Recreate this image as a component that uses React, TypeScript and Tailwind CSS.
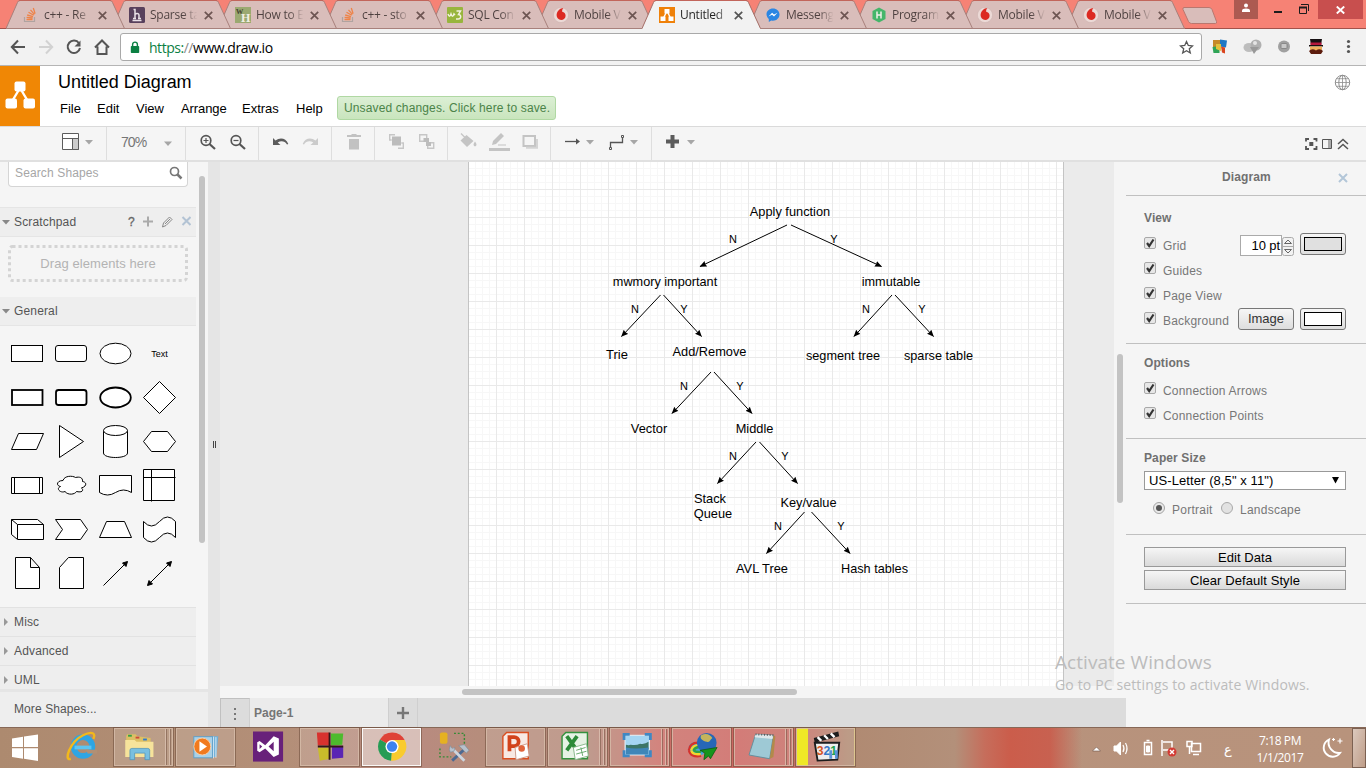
import React from "react";

type Kids = { children?: React.ReactNode };

/* ---------- Browser tabs ---------- */

const tabs: { icon: string; title: string }[] = [
  { icon: "so", title: "c++ - Re" },
  { icon: "h", title: "Sparse ta" },
  { icon: "wh", title: "How to E" },
  { icon: "so", title: "c++ - sto" },
  { icon: "w3", title: "SQL Con" },
  { icon: "voda", title: "Mobile V" },
  { icon: "draw", title: "Untitled" },
  { icon: "msg", title: "Messeng" },
  { icon: "hr", title: "Program" },
  { icon: "voda", title: "Mobile V" },
  { icon: "voda", title: "Mobile V" },
];

function Favicon({ kind }: { kind: string }) {
  switch (kind) {
    case "so":
      return (
        <svg width="16" height="16" viewBox="0 0 16 16" fill="none" className="shrink-0">
          <path d="M1.5 10v4.5h10V10" stroke="#b0a3a0" strokeWidth="1.2" />
          <path d="M3.5 12.5h6M3.6 10.4l6 .6M4.2 8l5.8 1.6M5.5 5.2l5.2 3M7.5 2.8l3.9 4.6M10.3 1l1.8 5.6" stroke="#ee8348" strokeWidth="1.3" />
        </svg>
      );
    case "h":
      return (
        <svg width="16" height="16" viewBox="0 0 16 16" fill="none" className="shrink-0">
          <rect width="16" height="16" rx="1.5" fill="#58405c" />
          <path d="M4.500 2.500h1.500v9M6 7.500c1-1.500 4-1.500 4 .5v3.500M4 11.500h3M9 11.500h3M3.500 13.500h9" stroke="#e9dfe6" strokeWidth="1.500" />
        </svg>
      );
    case "wh":
      return (
        <svg width="16" height="16" viewBox="0 0 16 16" className="shrink-0">
          <rect width="16" height="16" fill="#9ba971" />
          <text x="1" y="7" fontSize="10" fontWeight="bold" fontFamily="Liberation Serif, serif" fill="#4c4a36">w</text>
          <text x="6" y="15" fontSize="12" fontWeight="bold" fontFamily="Liberation Serif, serif" fill="#f3efe4">H</text>
        </svg>
      );
    case "w3":
      return (
        <svg width="16" height="16" viewBox="0 0 16 16" fill="none" className="shrink-0">
          <rect width="16" height="16" rx="1" fill="#98b53d" />
          <path d="M1 7c1 3 2 3 3 0 1 3 2 3 3 0l1 1M9.500 4h4l-2 3.500c3 0 3 4.500-.5 4.500H9" stroke="#f2f1df" strokeWidth="1.500" />
        </svg>
      );
    case "voda":
      return (
        <svg width="16" height="16" viewBox="0 0 16 16" className="shrink-0">
          <circle cx="8" cy="8" r="7.600" fill="#ecd9d6" stroke="#cfb5b2" strokeWidth=".6" />
          <path d="M10.500 1C7 1 3.600 4.500 3.600 8.300c0 2.700 2 4.700 4.500 4.700s4.500-1.800 4.500-4.300c0-2.300-1.500-3.500-3.400-4C9 3 9.500 1.700 10.500 1z" fill="#dc2a22" />
        </svg>
      );
    case "draw":
      return (
        <svg width="16" height="16" viewBox="0 0 16 16" className="shrink-0">
          <rect width="16" height="16" fill="#ef8109" />
          <path d="M8 4L4 12M8 4l4 8" stroke="#fff" strokeWidth="1.400" />
          <rect x="5.500" y="2" width="5" height="4.500" fill="#fff" />
          <rect x="1.500" y="9.500" width="5" height="4.500" fill="#fff" />
          <rect x="9.500" y="9.500" width="5" height="4.500" fill="#fff" />
        </svg>
      );
    case "msg":
      return (
        <svg width="16" height="16" viewBox="0 0 16 16" className="shrink-0">
          <path d="M8 1.500c-3.600 0-6.500 2.500-6.500 5.800 0 1.900.9 3.500 2.300 4.600V15l2.500-1.500c.5.100 1.100.2 1.700.2 3.600 0 6.500-2.800 6.500-6.200S11.600 1.500 8 1.500z" fill="#2b86e3" />
          <path d="M3.500 9.500l3.600-3.700 1.900 1.700 3.500-1.700L9 9.500 7 7.800z" fill="#fff" />
        </svg>
      );
    default:
      return (
        <svg width="16" height="16" viewBox="0 0 16 16" fill="none" className="shrink-0">
          <path d="M8 .5l6.500 3.500v8L8 15.500 1.500 12V4z" fill="#45b66a" />
          <path d="M6 4.500v7M10 4.500v7M6 8h4" stroke="#f1efe9" strokeWidth="1.500" />
        </svg>
      );
  }
}

const tabZ = ["z-20", "z-[19]", "z-[18]", "z-[17]", "z-[16]", "z-[15]", "z-30", "z-[13]", "z-[12]", "z-[11]", "z-10"];

function Tab({ icon, title, i }: { icon: string; title: string; i: number }) {
  const active = i === 6;
  return (
    <div className={`relative h-[29px] w-[106px] shrink-0 ${tabZ[i]}`}>
      <svg className="absolute left-0 top-0" width="120" height="29" fill="none">
        <path d="M0 29L11.500 2.500Q12 1 14 1H104Q106 1 106.500 2.500L118.500 29z" fill={active ? "#f2f2f2" : "#d9bdba"} />
        <path d="M0 28.500L11.500 2.500Q12 .5 14 .5H104Q106 .5 106.500 2.500L118.500 28.500" stroke={active ? "#a56f68" : "#a8817c"} />
        {!active && <path d="M0 28.500h119" stroke="#a8817c" />}
        <path d="M13 .5H105" stroke="#c2655b" />
      </svg>
      <div className="relative flex h-[29px] items-center pl-[17px] pt-px">
        <Favicon kind={icon} />
        <span
          className={`ml-[5px] w-[50px] whitespace-nowrap bg-clip-text font-['Open_Sans',sans-serif] text-[12px] tracking-[-0.25px] text-transparent ${
            active ? "bg-linear-to-r from-[#222] from-70% to-[#bbb] to-95%" : "bg-linear-to-r from-[#4d403f] from-65% to-[#d9bdba] to-95%"
          }`}
        >
          {title}
        </span>
        <svg className="ml-[4px] shrink-0" width="9" height="9" viewBox="0 0 9 9" fill="none">
          <path d="M.8.8l7.400 7.400M8.200.8L.8 8.200" stroke={active ? "#555" : "#6d5552"} strokeWidth="1.700" />
        </svg>
      </div>
    </div>
  );
}

function TabStrip() {
  return (
    <div className="flex h-[29px] shrink-0 bg-[#f68275] pl-[6px] shadow-[inset_0_-1px_0_#a2524b]">
      {tabs.map((t, i) => (
        <Tab key={i} {...t} i={i} />
      ))}
      <svg className="ml-[10px] mt-[6px] shrink-0" width="38" height="20">
        <path d="M2 1.500h25q2 0 3 2l4.500 12q.5 2-1 2H9.500q-2 0-3-2L1 3.500q-.5-2 1-2z" fill="#d9bdba" stroke="#b9776f" />
      </svg>
      <div className="ml-auto mr-[3px] flex h-[19px]">
        <div className="flex w-[24px] justify-center bg-[#ac5a51] pt-[3px]">
          <svg width="10" height="10" viewBox="0 0 10 10" fill="#fff">
            <circle cx="5" cy="2.500" r="2" />
            <path d="M1 9V7.500Q1 5.500 5 5.500t4 2V9z" />
          </svg>
        </div>
        <svg width="60" height="19" fill="none" stroke="#1c1c1c">
          <path d="M16 12h8" strokeWidth="2" />
          <path d="M41.500 7.500h7v6h-7z" />
          <path d="M41 6.500h8v2h-8z" fill="#1c1c1c" stroke="none" />
          <path d="M43 4.500h7.500V11" />
        </svg>
        <div className="flex w-[45px] items-center justify-center bg-[#c84f4e]">
          <svg width="9" height="8" viewBox="0 0 9 8" stroke="#fff" strokeWidth="1.900">
            <path d="M.8.500l7.400 7M8.200.500l-7.400 7" />
          </svg>
        </div>
      </div>
    </div>
  );
}

function AddressBar() {
  return (
    <div className="flex h-[37px] shrink-0 items-center border-b border-[#b5b5b5] bg-[#f2f2f2]">
      <svg width="120" height="36" fill="none" strokeWidth="2">
        <path d="M25 18H12M18 11.500L11.800 18l6.200 6.500" stroke="#555" />
        <path d="M39 18h13M46 11.500l6.200 6.500-6.200 6.500" stroke="#d2d2d2" />
        <path d="M79 14.200A6.200 6.200 0 1 0 80 19" stroke="#555" />
        <path d="M80.500 11.500v6h-6z" fill="#555" />
        <path d="M95 18.500L102 11.500l7 7M97.500 17.500V25h9v-7.500" stroke="#555" />
      </svg>
      <div className="flex h-[28px] w-[1082px] items-center rounded-[3px] border border-[#a9a9a9] bg-white pl-[9px] pr-[7px]">
        <svg width="10" height="13" viewBox="0 0 10 13" fill="none">
          <rect x=".8" y="5" width="8.400" height="7" rx=".8" fill="#0b8043" />
          <path d="M2.600 5V3.500a2.400 2.400 0 0 1 4.800 0V5" stroke="#0b8043" strokeWidth="1.400" />
        </svg>
        <span className="ml-[9px] font-['Open_Sans',sans-serif] text-[14px] tracking-[-0.47px] text-black">
          <span className="text-[#0b8043]">https:</span>
          <span className="text-[#8a8a8a]">//</span>www.draw.io
        </span>
        <svg className="ml-auto" width="15" height="15" viewBox="0 0 15 15" fill="none">
          <path d="M7.500 1.500l1.800 4 4.200.4-3.200 2.900 1 4.200-3.800-2.200L3.700 13l1-4.200L1.500 5.900l4.200-.4z" stroke="#555" strokeWidth="1.300" />
        </svg>
      </div>
      <svg width="164" height="36">
        <path d="M11 11h7v7l-7 1z" fill="#c68a28" />
        <path d="M18 10.500l7 1-1 7-6-1z" fill="#1f78c4" />
        <path d="M10.500 18l7-1v7h-6z" fill="#2fa457" />
        <path d="M19 17.500l4 1v6l-3-1z" fill="#d9441e" />
        <path d="M14 15h5v7l-5-2z" fill="#e3c23c" />
        <ellipse cx="47" cy="18.500" rx="5.500" ry="4.500" fill="#bdbdbd" />
        <circle cx="54" cy="16" r="5.500" fill="#b0b0b0" />
        <path d="M48 18h9l-5 7z" fill="#999" />
        <circle cx="53" cy="14" r="2" fill="#e4e4e4" />
        <circle cx="82" cy="17.500" r="6" fill="#a0a0a0" />
        <rect x="79" y="14.500" width="6" height="5" rx="1" fill="#c9c9c9" stroke="#7d7d7d" strokeWidth=".8" />
        <path d="M108 10h12l-1 6h-10z" fill="#161012" />
        <path d="M108.500 13.500h11V16h-11z" fill="#b5173b" />
        <path d="M107 16h14v1.500h-14z" fill="#161012" />
        <rect x="108" y="17.500" width="12" height="6" fill="#f0b05c" />
        <path d="M107 22q3-3 7-.5 4-2.500 7 .5l-2 3h-10z" fill="#5c1c0e" />
        <g fill="#555">
          <circle cx="146.500" cy="12.500" r="1.600" />
          <circle cx="146.500" cy="17.500" r="1.600" />
          <circle cx="146.500" cy="22.500" r="1.600" />
        </g>
      </svg>
    </div>
  );
}

/* ---------- App header ---------- */

function Header() {
  return (
    <div className="flex h-[60px] shrink-0 bg-white">
      <svg width="40" height="60" className="shrink-0">
        <rect width="40" height="60" fill="#f08705" />
        <path d="M20 22L11 37M20 22l9 15" stroke="#fff" strokeWidth="2.400" />
        <rect x="14.500" y="15.500" width="11" height="10" rx="2" fill="#fff" />
        <rect x="5.500" y="32.500" width="11.500" height="10" rx="2" fill="#fff" />
        <rect x="23.500" y="32.500" width="11.500" height="10" rx="2" fill="#fff" />
      </svg>
      <div className="flex flex-col">
        <div className="pl-[18px] pt-[5px] text-[18px] leading-[23px] tracking-[-0.03px] text-black">Untitled Diagram</div>
        <div className="flex items-center pl-[20px] pt-[2px] text-[13px] text-black">
          <span className="w-[37px] pt-px">File</span>
          <span className="w-[39px] pt-px">Edit</span>
          <span className="w-[45px] pt-px">View</span>
          <span className="w-[61px] pt-px tracking-[-0.1px]">Arrange</span>
          <span className="w-[54px] pt-px">Extras</span>
          <span className="w-[41px] pt-px">Help</span>
          <span className="h-[24px] w-[219px] whitespace-nowrap rounded-[3px] border border-[#b0d8a3] bg-linear-to-b from-[#dcefd5] to-[#c9e5bd] pl-[6px] text-[12px] leading-[22px] tracking-[0.13px] text-[#4b8349]">
            Unsaved changes. Click here to save.
          </span>
        </div>
      </div>
      <svg className="ml-auto mr-[15px] mt-[8px]" width="17" height="17" viewBox="0 0 17 17" fill="none" stroke="#8d8d8d">
        <circle cx="8.500" cy="8.500" r="7.200" />
        <ellipse cx="8.500" cy="8.500" rx="3.700" ry="7.200" />
        <path d="M8.500 1.200v14.600M1.200 8.500h14.600M2.500 4.700h12M2.500 12.300h12" strokeWidth=".8" />
      </svg>
    </div>
  );
}

function Caret({ x, y }: { x: number; y: number }) {
  return <path d={`M${x} ${y}h8l-4 4.500z`} fill="#a6a6a6" stroke="none" />;
}

function Toolbar() {
  return (
    <div className="flex h-[36px] shrink-0 border-b-2 border-t border-b-[#e0e0e0] border-t-[#dadada] bg-[#f5f5f5]">
      <svg width="106" height="33" fill="none" stroke="#5c5c5c">
        <path d="M62.500 6.500h16v16h-16z" fill="#fff" />
        <path d="M72.500 11.500h6v11h-6z" fill="#ccc" />
        <path d="M62.500 11.500h16" />
        <Caret x={85} y={13} />
      </svg>
      <div className="flex w-[79px] items-center border-l border-[#dedede] pb-[2px] pl-[14px] text-[14px] text-[#757575]">
        <span className="w-[43px] tracking-[-0.95px]">70%</span>
        <svg width="10" height="6" className="mt-[2px]">
          <Caret x={0} y={0.5} />
        </svg>
      </div>
      <svg width="73" height="33" className="border-l border-[#dedede]" fill="none" stroke="#555" strokeWidth="1.700">
        <circle cx="20" cy="13.500" r="4.800" />
        <path d="M23.500 17l5.500 5" strokeWidth="2.200" />
        <path d="M17.500 13.500h5M20 11v5" strokeWidth="1.200" />
        <circle cx="50" cy="13.500" r="4.800" />
        <path d="M53.500 17l5.500 5" strokeWidth="2.200" />
        <path d="M47.500 13.500h5" strokeWidth="1.200" />
      </svg>
      <svg width="73" height="33" className="border-l border-[#dedede]">
        <path d="M14 11v7h7.500l-2.800-2.500C22 13.500 26 14 28 17.500l1.300-.5C27 11 21 10 16.500 13.500z" fill="#5c5c5c" />
        <path d="M59 11v7h-7.500l2.800-2.500C51 13.500 47 14 45 17.500l-1.300-.5C46 11 52 10 56.500 13.500z" fill="#cbcbcb" />
      </svg>
      <svg width="43" height="33" className="border-l border-[#dedede]" fill="#c2c2c2">
        <path d="M15 8h4.500V7h5v1H29v2H15zM17 12h10v10.500H17z" />
      </svg>
      <svg width="73" height="33" className="border-l border-[#dedede]" fill="none" stroke="#c6c6c6">
        <path d="M20 7.700h-5.300v5.300h2M23 21.300h5.300V16h-2" strokeWidth="1.400" />
        <rect x="17" y="9.500" width="9" height="9" fill="#bcbcbc" stroke="none" />
        <path d="M44.700 7.700h7v6.600h-7zM52.700 15.700h6v5.600h-6z" strokeWidth="1.400" />
        <path d="M48.500 11H54v4h2v4h-5v-4h-2.500z" fill="#bcbcbc" stroke="none" />
      </svg>
      <svg width="103" height="33" className="border-l border-[#dedede]" fill="#c4c4c4">
        <path d="M12.500 13.500l6-5.500 7 6-6.500 6z" />
        <path d="M13 6.500l7 7" stroke="#c4c4c4" strokeWidth="1.300" />
        <path d="M27 14.500q3 4 0 5-3-1 0-5z" />
        <path d="M44 18l1-4 8-8 3 3-8 8zM50 17.500h8v1h-8zM41 21h21v3H41z" />
        <path d="M75.500 9h11.500v10H75.500z" fill="none" stroke="#c4c4c4" strokeWidth="2" />
        <path d="M78 20.800h11V12" fill="none" stroke="#d4d4d4" strokeWidth="2" />
      </svg>
      <svg width="101" height="33" className="border-l border-[#dedede]" fill="none" stroke="#555">
        <path d="M14 14.500h12" strokeWidth="1.300" />
        <path d="M25 11.500l4 3-4 3z" fill="#555" stroke="none" />
        <Caret x={35} y={13} />
        <path d="M59.500 20v-4.500h12V11" strokeWidth="1.300" />
        <path d="M58.500 20.500h2v2h-2zM70.500 8.500h2v2h-2z" />
        <Caret x={79} y={13} />
      </svg>
      <svg width="60" height="33" className="border-l border-[#dedede]">
        <path d="M18.500 8h4v4.500H27v4h-4.500V21h-4v-4.500H14v-4h4.500z" fill="#5c5c5c" />
        <Caret x={35} y={13} />
      </svg>
      <svg className="ml-auto mr-[16px]" width="46" height="33" fill="none" stroke="#555" strokeWidth="1.800">
        <path d="M2 14.500V12h3M9.500 12h3v2.500M12.500 19v3h-3M5 22H2v-3" />
        <rect x="5.300" y="15" width="4" height="4" fill="#555" stroke="none" />
        <path d="M18.500 12.500h9v9h-9z" strokeWidth="1" />
        <path d="M24 13h3v8h-3z" fill="#aaa" stroke="none" />
        <path d="M34 17l5-4.500 5 4.500M34 22l5-4.500 5 4.500" strokeWidth="1.500" />
      </svg>
    </div>
  );
}

/* ---------- Left sidebar ---------- */

const shapes: React.ReactNode[] = [
  <rect x="6.500" y="14.500" width="31" height="16" />,
  <rect x="6.500" y="14.500" width="31" height="16" rx="2.500" />,
  <ellipse cx="22.500" cy="22.500" rx="15.500" ry="10.300" />,
  <text x="22.500" y="26" textAnchor="middle" fontSize="9" fill="#000" stroke="none">Text</text>,
  <rect x="7" y="15" width="30.500" height="15" strokeWidth="1.800" />,
  <rect x="7" y="15" width="30.500" height="15" rx="2.500" strokeWidth="1.800" />,
  <ellipse cx="22.500" cy="22.500" rx="15.300" ry="10" strokeWidth="1.800" />,
  <path d="M22.500 6.500l16 16-16 16-16-16z" />,
  <path d="M13.500 14.500h25l-7 16h-25z" />,
  <path d="M10.500 6.500l24 16-24 16z" />,
  <g>
    <path d="M10.500 11.500v22.500c0 6 24 6 24 0V11.500" />
    <ellipse cx="22.500" cy="11.500" rx="12" ry="5" />
  </g>,
  <path d="M6.500 22.500l8-10h16l8 10-8 10h-16z" />,
  <path d="M6.500 14.500h31v16h-31zM9.500 14.500v16M34.500 14.500v16" />,
  <path d="M14 17.500c-6 0-7.500 5-2.500 6-5 2 0 7 4.500 5 3 4 10 3 11.500 0 6 1.500 7.500-1.500 5-3.500 6-2 5-6 1-6.500.5-4-3-5-7-4-3-2-11-2-12.500 3z" />,
  <path d="M6.500 12.500h32v17q-8-5-16 0t-16 0z" />,
  <path d="M6.500 6.500h31v31h-31zM6.500 14.500h32M14.500 6.500v32" />,
  <path d="M6.500 12.500h26l6 5v15h-26l-6-5zM12.500 32v-14.500h26M12.500 17.500l-6-5" />,
  <path d="M6.500 12.500h25l7 10-7 10h-25l7-10z" />,
  <path d="M13.500 14.500h18l7 16h-32z" />,
  <path d="M6.500 14.500q8 9 16 0t16 0v16q-8-9-16 0t-16 0z" />,
  <path d="M10.500 6.500h15l9 10v21h-24zM25.500 6.500v10h9" />,
  <path d="M19.500 6.500h15v31h-24v-21z" />,
  <g>
    <path d="M10.500 34.500l22-22" />
    <path d="M34.500 10.500l-5 1.500 3.500 3.500z" fill="#000" />
  </g>,
  <g>
    <path d="M12 33l21-21" />
    <path d="M34.500 10.500l-5 1.500 3.500 3.500zM10.500 34.500l1.500-5 3.500 3.500z" fill="#000" />
  </g>,
];

function Sidebar() {
  return (
    <div className="flex w-[208px] shrink-0 flex-col bg-[#f5f5f5]">
      <div className="flex h-[527px] overflow-hidden">
        <div className="flex w-[196px] flex-col">
          <div className="ml-[8px] flex h-[25px] w-[180px] shrink-0 items-center justify-between rounded-b-[4px] border border-t-0 border-[#d5d5d5] bg-white pl-[6px] pr-[4px]">
            <span className="pb-[2px] text-[12px] tracking-[0.13px] text-[#a6a6a6]">Search Shapes</span>
            <svg className="mb-[3px]" width="14" height="14" fill="none" stroke="#777">
              <circle cx="5.500" cy="5.500" r="4" strokeWidth="1.700" />
              <path d="M8.500 8.500l4 4" strokeWidth="2.500" />
            </svg>
          </div>
          <div className="mt-[20px] flex h-[30px] shrink-0 items-center border-y border-[#e5e5e5] bg-[#eee] text-[12px] text-[#555]">
            <svg width="14" height="10">
              <path d="M2 3h8l-4 4.500z" fill="#888" />
            </svg>
            <span className="w-[113px] tracking-[0.15px]">Scratchpad</span>
            <svg width="64" height="16" fill="none">
              <text x="1" y="12" fontSize="12" fill="#666" stroke="#666" strokeWidth=".3">?</text>
              <path d="M21 2.500v10M16 7.500h10" stroke="#aaa" strokeWidth="2" />
              <path d="M35.500 13l1-4 6-6 2.500 2.500-6 6zM38 10l5-5" stroke="#888" />
              <path d="M55.500 3l8 8M63.500 3l-8 8" stroke="#b3c3d4" strokeWidth="2" />
            </svg>
          </div>
          <div className="relative ml-[8px] mt-[8px] flex h-[37px] w-[180px] shrink-0 items-center justify-center text-[13px] tracking-[0.07px] text-[#b3b3b3]">
            <svg className="absolute left-0 top-0" width="180" height="37" fill="none">
              <rect x="1.500" y="1.500" width="177" height="34" rx="3" stroke="#d4d4d4" strokeWidth="3" strokeDasharray="3 3" />
            </svg>
            Drag elements here
          </div>
          <div className="mt-[15px] flex h-[29px] shrink-0 items-center border-b border-[#e5e5e5] bg-[#eee] text-[12px] text-[#555]">
            <svg width="14" height="10">
              <path d="M2 3h8l-4 4.500z" fill="#888" />
            </svg>
            <span className="tracking-[0.15px]">General</span>
          </div>
          <div className="grid shrink-0 grid-cols-[repeat(4,44px)] pb-[12px] pl-[5px] pt-[5px]">
            {shapes.map((s, i) => (
              <svg key={i} width="44" height="44" fill="#fff" stroke="#000">
                {s}
              </svg>
            ))}
          </div>
          {["Misc", "Advanced", "UML"].map((t) => (
            <div key={t} className="flex h-[29px] shrink-0 items-center border-t border-[#e2e2e2] bg-[#eee] text-[12px] tracking-[0.15px] text-[#555]">
              <svg width="14" height="10">
                <path d="M4 1v8l4-4z" fill="#999" />
              </svg>
              {t}
            </div>
          ))}
        </div>
        <div className="flex w-[12px] flex-col bg-[#f5f5f5] pl-[3px] pt-[14px]">
          <div className="h-[367px] w-[6px] rounded-full bg-[#c3c3c3]" />
        </div>
      </div>
      <div className="flex h-[38px] items-center border-t-[3px] border-[#e5e5e5] bg-[#eee] pb-[2px] pl-[14px] text-[12px] tracking-[0.1px] text-[#555]">
        More Shapes...
      </div>
    </div>
  );
}

/* ---------- Canvas ---------- */

const nodes: [string, number, number, number][] = [
  ["Apply function", 790, 216, 12.8],
  ["mwmory important", 665, 286, 12.7],
  ["immutable", 891, 286, 12.7],
  ["Trie", 617, 359, 13],
  ["Add/Remove", 709.5, 356, 12.8],
  ["segment tree", 843, 360, 12.7],
  ["sparse table", 938.5, 360, 12.7],
  ["Vector", 649, 433, 12.8],
  ["Middle", 754.5, 433, 12.8],
  ["Stack", 710, 503, 12.8],
  ["Queue", 713, 518, 12.8],
  ["Key/value", 808.5, 507, 12.8],
  ["AVL Tree", 762, 573, 12.8],
  ["Hash tables", 874.5, 573, 12.7],
  ["N", 733, 243, 11],
  ["Y", 834, 243, 11],
  ["N", 635, 313, 11],
  ["Y", 684, 313, 11],
  ["N", 866, 313, 11],
  ["Y", 922, 313, 11],
  ["N", 684, 390, 11],
  ["Y", 740, 390, 11],
  ["N", 733, 460, 11],
  ["Y", 785, 460, 11],
  ["N", 778, 530, 11],
  ["Y", 841, 530, 11],
];

const edges: [number, number, number, number][] = [
  [787, 225, 700, 266.5],
  [791, 225, 881.5, 266.5],
  [660.5, 295, 621.5, 336.5],
  [663.5, 295, 701.5, 336.5],
  [892, 295, 854, 336.5],
  [895, 295, 933.5, 336.5],
  [711, 372, 672, 413.5],
  [714, 372, 752, 413.5],
  [756, 442, 717.5, 483.5],
  [759.5, 442, 797.5, 483.5],
  [804.5, 512, 766.5, 553.5],
  [811.5, 512, 850, 553.5],
];

function Canvas() {
  return (
    <div className="flex w-[906px] shrink-0 flex-col">
      <div className="flex h-[524px]">
        <svg width="894" height="524" viewBox="220 162 894 524" className="shrink-0">
          <defs>
            <pattern id="grid" width="28" height="28" x="496" y="189" patternUnits="userSpaceOnUse">
              <path d="M7.500 0v28M14.500 0v28M21.500 0v28M0 7.500h28M0 14.500h28M0 21.500h28" stroke="#f7f7f7" />
              <path d="M.5 0v28M0 .5h28" stroke="#e9e9e9" />
            </pattern>
            <marker id="arrow" viewBox="0 0 7 6" refX="6.500" refY="3" markerWidth="7" markerHeight="6.500" orient="auto">
              <path d="M0 0l7 3-7 3 .8-3z" />
            </marker>
          </defs>
          <rect x="220" y="162" width="894" height="524" fill="#ebebeb" />
          <rect x="469" y="162" width="594" height="524" fill="#fff" />
          <rect x="469" y="162" width="594" height="524" fill="url(#grid)" />
          <path d="M468.500 162v524M1063.500 162v524" stroke="#c4c4c4" />
          {edges.map(([a, b, c, d], i) => (
            <path key={i} d={`M${a} ${b}L${c} ${d}`} stroke="#000" markerEnd="url(#arrow)" />
          ))}
          {nodes.map(([t, x, y, s], i) => (
            <text key={i} x={x} y={y} fontSize={s} textAnchor="middle" fill="#000">
              {t}
            </text>
          ))}
        </svg>
        <div className="flex w-[12px] flex-col bg-[#f5f5f5] pl-[3px] pt-[192px]">
          <div className="h-[149px] w-[6px] rounded-full bg-[#c3c3c3]" />
        </div>
      </div>
      <div className="flex h-[12px] bg-[#f5f5f5] pl-[242px] pt-[3px]">
        <div className="h-[6px] w-[335px] rounded-full bg-[#c3c3c3]" />
      </div>
      <div className="flex h-[29px] bg-[#dcdcdc] text-[12px] font-bold text-[#757575]">
        <div className="flex w-[30px] items-center justify-center border-l border-r border-t border-[#c0c0c0] border-r-[#cfcfcf]">
          <svg width="4" height="14" fill="#777">
            <path d="M1 2h2v2H1zM1 7h2v2H1zM1 12h2v2H1z" />
          </svg>
        </div>
        <div className="flex w-[139px] items-center border-r border-[#cfcfcf] bg-[#ebebeb] pl-[4px]">Page-1</div>
        <div className="flex w-[29px] items-center justify-center border-r border-[#cfcfcf]">
          <svg width="12" height="12" stroke="#777" strokeWidth="2.400">
            <path d="M6 0v12M0 6h12" />
          </svg>
        </div>
      </div>
    </div>
  );
}

/* ---------- Format panel ---------- */

function Check({ label }: { label: string }) {
  return (
    <div className="flex h-[25px] w-[94px] items-center whitespace-nowrap text-[12px] tracking-[0.2px] text-[#777]">
      <svg className="mb-[3px] mr-[7px] shrink-0" width="12" height="12" fill="none">
        <rect x=".5" y=".5" width="11" height="11" rx="1.500" fill="#e7e7e7" stroke="#a8a8a8" />
        <path d="M3 6l2.200 3L9.500 2.500" stroke="#333" strokeWidth="2.200" />
      </svg>
      <span className="pt-[2px]">{label}</span>
    </div>
  );
}

function Swatch({ dark }: { dark?: boolean }) {
  return (
    <div className="flex h-[22px] w-[46px] items-center justify-center rounded-[3px] border border-[#777] bg-linear-to-b from-[#f6f6f6] to-[#dedede]">
      <div className={`h-[14px] w-[38px] border border-black ${dark ? "bg-[#e0e0e0]" : "bg-white"}`} />
    </div>
  );
}

function Section({ title, className, children }: Kids & { title?: string; className: string }) {
  return (
    <div className={`flex shrink-0 flex-col border-b border-[#c0c0c0] pl-[18px] pr-[20px] ${className}`}>
      {title && <div className="text-[12px] font-bold leading-[16px] tracking-[0.1px] text-[#707070]">{title}</div>}
      {children}
    </div>
  );
}

function FormatPanel() {
  return (
    <div className="flex w-[240px] shrink-0 flex-col bg-[#f5f5f5]">
      <div className="flex h-[34px] items-center border-b border-[#c0c0c0] pl-[96px] pr-[18px]">
        <span className="pb-[4px] text-[12px] font-bold tracking-[0.1px] text-[#707070]">Diagram</span>
        <svg className="mb-[2px] ml-auto" width="10" height="10" stroke="#b3c6d8" strokeWidth="2">
          <path d="M1 1l8 8M9 1L1 9" />
        </svg>
      </div>
      <Section title="View" className="h-[148px] pt-[14px]">
        <div className="mt-[6px] flex">
          <Check label="Grid" />
          <div className="ml-[2px] mt-[3px] flex h-[21px] w-[42px] shrink-0 items-center justify-end border border-[#aaa] bg-white pr-px text-[13px] tracking-[-0.1px] text-black">10 pt</div>
          <svg className="mt-[5px] shrink-0" width="12" height="19" fill="none" stroke="#aaa">
            <rect x=".5" y=".5" width="11" height="18" rx="2" fill="#f2f2f2" />
            <path d="M1 9.500h10" />
            <path d="M2.500 6.500L6 3l3.500 3.500zM2.500 12.500L6 16l3.500-3.500z" stroke="#666" />
          </svg>
          <div className="ml-[6px] mt-px h-[22px]">
            <Swatch dark />
          </div>
        </div>
        <Check label="Guides" />
        <Check label="Page View" />
        <div className="flex">
          <Check label="Background" />
          <div className="mt-px flex h-[22px] gap-[6px]">
            <div className="flex h-[22px] w-[56px] items-center justify-center rounded-[3px] border border-[#777] bg-linear-to-b from-[#f6f6f6] to-[#dedede] text-[13px] text-[#333]">Image</div>
            <Swatch />
          </div>
        </div>
      </Section>
      <Section title="Options" className="h-[95px] pt-[11px]">
        <div className="mt-[6px]">
          <Check label="Connection Arrows" />
          <Check label="Connection Points" />
        </div>
      </Section>
      <Section title="Paper Size" className="h-[96px] pt-[11px]">
        <div className="mt-[5px] flex h-[19px] items-center justify-between border border-[#999] bg-white pl-[4px] pr-[6px] text-[13px] tracking-[0.09px] text-black">
          US-Letter (8,5" x 11")
          <svg width="7" height="7">
            <path d="M0 0h7l-3.500 6.500z" />
          </svg>
        </div>
        <div className="mt-[10px] flex h-[20px] items-center pl-[9px] text-[12px] tracking-[0.25px] text-[#777]">
          <svg className="mb-[4px] mr-[7px]" width="12" height="12">
            <circle cx="6" cy="6" r="5.500" fill="#e9e9e9" stroke="#a3a3a3" />
            <circle cx="6" cy="6" r="3" fill="#555" />
          </svg>
          <span className="w-[49px]">Portrait</span>
          <svg className="mb-[4px] mr-[7px]" width="12" height="12">
            <circle cx="6" cy="6" r="5.500" fill="#e2e2e2" stroke="#a8a8a8" />
          </svg>
          Landscape
        </div>
      </Section>
      <Section className="h-[69px] gap-[3px] pt-[12px]">
        {["Edit Data", "Clear Default Style"].map((t) => (
          <div key={t} className="flex h-[20px] items-center justify-center border border-[#999] bg-linear-to-b from-[#f6f6f6] to-[#dadada] pt-px text-[13px] tracking-[0.08px] text-black">
            {t}
          </div>
        ))}
      </Section>
    </div>
  );
}

/* ---------- Taskbar ---------- */

type TaskItem = { box: "none" | "single" | "stack" | "active" | "flash"; art: React.ReactNode };

const tasks: TaskItem[] = [
  {
    box: "none",
    art: (
      <g fill="none">
        <circle cx="17" cy="16" r="10" stroke="#2ea5e4" strokeWidth="6" />
        <path d="M8 17h18" stroke="#5cc5f2" strokeWidth="4" />
        <path d="M20 19.500h12v4H22z" fill="#b19075" />
        <path d="M4 29C-4 32 3 11 17 4c10-5 14-2 11 4" stroke="#f2b81c" strokeWidth="2.600" />
      </g>
    ),
  },
  {
    box: "stack",
    art: (
      <g transform="translate(-5 0)">
        <path d="M2 5l1-2h9l2 2 14 2v6H2z" fill="#dcbf64" />
        <path d="M1 9l10 0 2 2h18v16H1z" fill="#f6e39b" />
        <path d="M4 3.500h4v2H4z" fill="#35a145" />
        <path d="M12 5.500h4v2h-4z" fill="#cf4937" />
        <path d="M20 7.500h4v2h-4z" fill="#2d7bd0" />
        <path d="M6 30V20q0-2 2-2h17q2 0 2 2v10h-5v-7H11v7z" fill="#79bfe0" stroke="#4d93ba" strokeWidth=".8" />
      </g>
    ),
  },
  {
    box: "single",
    art: (
      <g>
        <path d="M21 5h8l-2 22h-6z" fill="#6fb0d8" />
        <path d="M26.500 6v22M24 5.500v23" stroke="#fff" strokeWidth=".8" />
        <rect x="3" y="5.500" width="20" height="22.500" fill="#a9d1e8" stroke="#5f9ec6" />
        <circle cx="12" cy="16" r="9" fill="#f17a1e" stroke="#fbd0a8" />
        <path d="M9 10.500v11l8-5.500z" fill="#fff" />
      </g>
    ),
  },
  {
    box: "none",
    art: (
      <g>
        <rect x="0" y="0" width="32" height="32" fill="#68217a" />
        <path d="M4.500 11.500L7 10l6 4.500L22 5l5.500 2.500v17L22 27l-9-9-6 4-2.500-1.500zM7 13.500v5l2.800-2.500zM22 11l-5.500 5 5.500 5z" fill="#fff" fillRule="evenodd" />
      </g>
    ),
  },
  {
    box: "single",
    art: (
      <g>
        <path d="M2 1h13v14H3z" fill="#d8322e" />
        <path d="M17 2h13l-1 12-12 1z" fill="#4dbb2d" />
        <path d="M3 17h13v12l-11 2z" fill="#c9bd2b" />
        <path d="M18 16h12v12l-12 1z" fill="#5a25b3" />
        <path d="M15.500 1v29M3 16h27" stroke="#321719" strokeWidth="2" />
      </g>
    ),
  },
  {
    box: "active",
    art: (
      <g transform="translate(1 0)">
        <path d="M15 16L2.100 8.500A15 15 0 0 1 28.400 9z" fill="#df4236" />
        <path d="M15 16L28.400 9A15 15 0 0 1 14 31z" fill="#f9cb2e" />
        <path d="M15 16L14 31A15 15 0 0 1 2.100 8.500z" fill="#279c55" />
        <path d="M15 9h13.400a15 15 0 0 1 1.300 7L14 31l8-12z" fill="#f9cb2e" />
        <circle cx="15" cy="16" r="7" fill="#fff" />
        <circle cx="15" cy="16" r="5.500" fill="#3e82ee" />
      </g>
    ),
  },
  {
    box: "none",
    art: (
      <g>
        <path d="M16 2h11v12M1 18v9h12" stroke="#348b36" strokeWidth="1.500" strokeDasharray="2 2" fill="none" />
        <rect x="1" y="1" width="8" height="12" rx="2" fill="#e5b121" />
        <path d="M14 31L28 18" stroke="#4c6a92" strokeWidth="3" />
        <path d="M14 18l13 13" stroke="#cdd6df" strokeWidth="3" />
        <path d="M11 19l1-4 2 3 3-1-1 4-4 1zM21 15l6-1 5 6-3 3-4-4z" fill="#b7c1cc" stroke="#7a8794" strokeWidth=".6" />
      </g>
    ),
  },
  {
    box: "single",
    art: (
      <g>
        <path d="M6 1h23v28H2V5z" fill="#f8e9e3" stroke="#d94e20" strokeWidth="1.500" />
        <path d="M9 21V6h5a4.500 4.500 0 0 1 0 9.500H9" stroke="#d2431b" strokeWidth="4" fill="none" />
        <path d="M15 17l13-4 2 13-14 4z" fill="#fff" stroke="#cb9c8c" />
        <circle cx="22" cy="18" r="3.500" fill="#e1643b" />
      </g>
    ),
  },
  {
    box: "stack",
    art: (
      <g transform="translate(-3 0)">
        <path d="M6 1h23v28H2V5z" fill="#e6f2e4" stroke="#34913e" strokeWidth="1.500" />
        <path d="M7 5l11 15M18 5L7 20" stroke="#2c8a38" strokeWidth="4" />
        <path d="M14 17l14-4 2 13-14 4z" fill="#fff" stroke="#86b68a" />
        <path d="M17 20l10-3M17 24l11-3M22 17l2 9" stroke="#63a869" />
      </g>
    ),
  },
  {
    box: "stack",
    art: (
      <g transform="translate(-3 0)">
        <rect x="3" y="4" width="26" height="21" fill="#a4d5f2" stroke="#e9f3f8" />
        <path d="M4 14q3 1 5 0 6 1 10-1 5 1 9-2v8H4z" fill="#3c7667" />
        <path d="M4 17q10 2 24 0v7.500H4z" fill="#3f86b8" />
        <path d="M2 9V3h6M24 3h6v6M30 20v6h-6M8 26H2v-6" stroke="#3e88c4" strokeWidth="3" fill="none" />
      </g>
    ),
  },
  {
    box: "single",
    art: (
      <g>
        <path d="M1.500 18A9 7 0 0 0 12 26l6-2-4-12Q3 9 1.500 18" fill="#41a8e0" />
        <path d="M2 20Q3 11 14 12M2 19q1 9 13 7" stroke="#d7312a" strokeWidth="2.500" fill="none" />
        <path d="M4.500 20Q6 14 14 14.500M4.500 20q1 5 10 4" stroke="#f3d52e" strokeWidth="2.500" fill="none" />
        <path d="M7 20q2-4 8-3.500M7 19.500q2 3 8 2" stroke="#2fa345" strokeWidth="2.500" fill="none" />
        <circle cx="21" cy="12" r="10.500" fill="#2767b7" />
        <path d="M15 4c5-3 10-1 12 3-3 2-2 5-6 4s-8-3-6-7z" fill="#c4b45c" />
        <path d="M32 17L14 20l5 3-1 7 5-4 2 3z" fill="#17951c" stroke="#0b5a10" strokeWidth=".8" />
      </g>
    ),
  },
  {
    box: "stack",
    art: (
      <g transform="translate(-3 0)">
        <path d="M10 3l19 1-4 25-22-4z" fill="#9ec9d5" stroke="#618e9c" />
        <path d="M10 3l19 1-1 4-19-2z" fill="#dde7ea" />
        <path d="M25 29l4-25 2 1-2 22z" fill="#b28a4a" />
        <path d="M10 3l19 1" stroke="#555" strokeWidth="2" strokeDasharray="1 2" />
      </g>
    ),
  },
  {
    box: "flash",
    art: (
      <g transform="translate(1 0)">
        <path d="M2 7l26-7 1 5L3 12z" fill="#1d1d1d" />
        <path d="M6 6l4 4M13 4l4 4M20 2l4 4" stroke="#fff" strokeWidth="2.500" />
        <path d="M3 12h26l-2 18-21 1z" fill="#eee" stroke="#1d1d1d" strokeWidth="2" />
        <text x="5" y="25" fontSize="13" fontWeight="bold" fontFamily="Liberation Sans, sans-serif">
          <tspan fill="#d9541f">3</tspan>
          <tspan fill="#3477c7">2</tspan>
          <tspan fill="#21a04a">1</tspan>
        </text>
        <path d="M20 20v9M26 20v9" stroke="#5b93d8" strokeWidth="3" />
      </g>
    ),
  },
];

const boxClass: Record<TaskItem["box"], string> = {
  none: "border-transparent",
  single: "border-[#d7bdaa]/80 bg-white/15 outline outline-[#71513f]/60",
  stack: "border-[#d7bdaa]/80 bg-white/15 outline outline-[#71513f]/60",
  active: "border-white/90 bg-white/45 outline outline-[#71513f]/60",
  flash: "border-[#d7bdaa]/80 bg-linear-to-r from-[#efe826] from-20% to-white/15 to-20% outline outline-[#71513f]/60",
};

function Taskbar() {
  return (
    <div className="flex h-[41px] shrink-0 border-t border-[#876857] bg-linear-to-r from-[#ad8a6f] from-0% via-[#b6917c] via-30% to-[#b8937c] to-100%">
      <div className="flex h-[40px] w-full bg-[linear-gradient(to_right,transparent_290px,#b98a80_400px,#b68d7c_480px,#b5897a_590px,#cb6f68_660px,#cc6661_740px,#c56f65_800px,#b08a72_850px,#b3907a_955px,#c66d5b_985px,#cb5d4b_1010px,#c86150_1050px,transparent_1082px)]">
        <svg width="52" height="40" fill="#fff" className="shrink-0">
          <path d="M12 10.500l11-1.700V19H12zM24 8.600L38 6.500V19H24zM12 20.200h11v10.500l-11-1.700zM24 20.200h14V33l-14-2.200z" />
        </svg>
        <div className="flex gap-[3px]">
          {tasks.map((t, i) => (
            <div key={i} className={`flex h-[38px] w-[59px] items-center justify-center border ${boxClass[t.box]}`}>
              <svg width="57" height="36" viewBox="-13 -2 57 36" className="shrink-0">
                <g transform="translate(1 .5) scale(.94)">{t.art}</g>
                {t.box === "stack" && <path d="M38.500-3v38M42.500-3v38" stroke="#7a5947" strokeOpacity=".6" />}
                {t.box === "stack" && <path d="M37.500-3v38M41.500-3v38" stroke="#e0c8b8" strokeOpacity=".7" />}
              </svg>
            </div>
          ))}
        </div>
        <svg className="ml-auto" width="150" height="40" viewBox="-4 0 150 40" fill="none" stroke="#fff">
          <path d="M2.500 23l4-4 4 4z" fill="#fff" stroke="#6b5245" strokeWidth=".6" />
          <path d="M24 18h2.500l4-4v13l-4-4H24z" fill="#fff" />
          <path d="M33 17q2 3.500 0 7M35.500 15q3 5.500 0 11" strokeWidth="1.200" />
          <path d="M54.500 14.500h7v12h-7zM56.500 12.500h3" strokeWidth="1.500" />
          <path d="M56.500 18h3v6h-3z" fill="#fff" />
          <path d="M72 12v16M73 14h9v8h-9" strokeWidth="1.500" />
          <circle cx="82" cy="24" r="4.500" fill="#d33b34" stroke="none" />
          <path d="M80 22l4 4M84 22l-4 4" strokeWidth="1.400" />
          <path d="M101.500 15.500h9v8h-9zM97 13.500h5v5h-5zM99.500 18v8M103 26.500h6" strokeWidth="1.500" />
          <text x="134" y="26" fontSize="13" fontFamily="DejaVu Sans, sans-serif" fill="#fff" stroke="none">ع</text>
        </svg>
        <div className="w-[76px] pl-[12px] pt-[4px] text-center font-['Open_Sans',sans-serif] text-[12px] leading-[17px] tracking-[-0.4px] text-white">
          <div>7:18 PM</div>
          <div>1/1/2017</div>
        </div>
        <svg width="40" height="40" viewBox="-3 0 40 40" fill="none" stroke="#fff">
          <path d="M14 11.500a9 9 0 1 0 11 13.500A10.500 10.500 0 0 1 14 11.500z" strokeWidth="1.900" />
          <path d="M25 10.500v5M22.500 13h5M18.500 10v3M17 11.500h3" strokeWidth="1.200" />
        </svg>
        <div className="w-[14px] border border-[#7c6152] bg-linear-to-br from-white/50 to-white/10" />
      </div>
    </div>
  );
}

/* ---------- Page ---------- */

export default function App() {
  return (
    <div className="relative flex h-[768px] w-[1366px] flex-col overflow-hidden bg-[#f5f5f5] font-['Liberation_Sans',Arial,sans-serif]">
      <TabStrip />
      <AddressBar />
      <Header />
      <Toolbar />
      <div className="flex h-[565px] shrink-0">
        <Sidebar />
        <div className="flex w-[12px] shrink-0 items-center justify-center bg-[#e5e5e5]">
          <svg width="4" height="7" stroke="#444">
            <path d="M1.500 0v7M3.500 0v7" />
          </svg>
        </div>
        <Canvas />
        <FormatPanel />
      </div>
      <Taskbar />
      <div className="absolute left-[1055px] top-[650px] whitespace-nowrap font-['Open_Sans',sans-serif] text-[#bcbcbc]">
        <div className="text-[19px] leading-[25px] tracking-[0.05px]">Activate Windows</div>
        <div className="text-[14px] leading-[20px] tracking-[0.14px]">Go to PC settings to activate Windows.</div>
      </div>
    </div>
  );
}
